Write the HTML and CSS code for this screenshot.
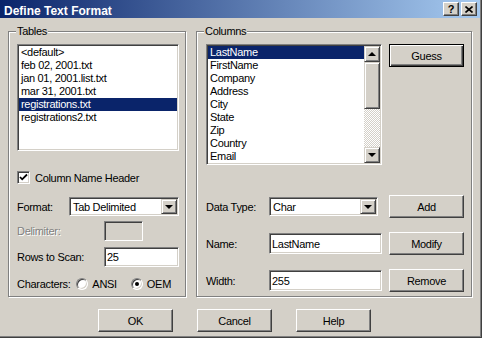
FILE: index.html
```html
<!DOCTYPE html>
<html lang="en">
<head>
    <meta charset="UTF-8">
    <title>Define Text Format</title>
    <link rel="stylesheet" href="styles.css">
</head>
<body>
    <div class="window">
        <div class="titlebar">
            <span class="title">Define Text Format</span>
            <div class="caption-buttons">
                <span class="caption-btn help">?</span>
                <span class="caption-btn close">
                    <svg width="8" height="7" viewBox="0 0 8 7"><path d="M0.5 0.5 L7.5 6.5 M7.5 0.5 L0.5 6.5" stroke="#000" stroke-width="1.6" fill="none"/></svg>
                </span>
            </div>
        </div>

        <div class="client">
            <div class="groups">
                <div class="group tables">
                    <div class="group-label">Tables</div>
                    <div class="group-body">
                        <div class="listbox table-list">
                            <div class="list-item">&lt;default&gt;</div>
                            <div class="list-item">feb 02, 2001.txt</div>
                            <div class="list-item">jan 01, 2001.list.txt</div>
                            <div class="list-item">mar 31, 2001.txt</div>
                            <div class="list-item selected">registrations.txt</div>
                            <div class="list-item">registrations2.txt</div>
                        </div>

                        <div class="check-row">
                            <span class="checkbox">
                                <svg width="9" height="9" viewBox="0 0 9 9"><path d="M1 4 L3.2 6.3 L8 1.5" stroke="#000" stroke-width="1.8" fill="none"/></svg>
                            </span>
                            <span>Column Name Header</span>
                        </div>

                        <div class="field-row format-row">
                            <span class="field-label">Format:</span>
                            <div class="combo format-combo">
                                <span class="combo-text">Tab Delimited</span>
                                <span class="combo-btn"><span class="arrow-down"></span></span>
                            </div>
                        </div>

                        <div class="field-row delim-row">
                            <span class="field-label disabled">Delimiter:</span>
                            <div class="textbox disabled-box"></div>
                        </div>

                        <div class="field-row scan-row">
                            <span class="field-label">Rows to Scan:</span>
                            <div class="textbox scan-box">25</div>
                        </div>

                        <div class="field-row chars-row">
                            <span class="field-label">Characters:</span>
                            <span class="radio-option">
                                <span class="radio"></span>ANSI
                            </span>
                            <span class="radio-option">
                                <span class="radio checked"><span class="dot"></span></span>OEM
                            </span>
                        </div>
                    </div>
                </div>

                <div class="group columns">
                    <div class="group-label">Columns</div>
                    <div class="group-body">
                        <div class="columns-top">
                            <div class="listbox column-list">
                                <div class="list-items">
                                    <div class="list-item selected">LastName</div>
                                    <div class="list-item">FirstName</div>
                                    <div class="list-item">Company</div>
                                    <div class="list-item">Address</div>
                                    <div class="list-item">City</div>
                                    <div class="list-item">State</div>
                                    <div class="list-item">Zip</div>
                                    <div class="list-item">Country</div>
                                    <div class="list-item">Email</div>
                                </div>
                                <div class="scrollbar">
                                    <span class="sb-btn"><span class="arrow-up"></span></span>
                                    <span class="sb-thumb"></span>
                                    <span class="sb-track"></span>
                                    <span class="sb-btn"><span class="arrow-down"></span></span>
                                </div>
                            </div>
                            <button class="btn default">Guess</button>
                        </div>

                        <div class="column-form">
                            <span class="field-label">Data Type:</span>
                            <div class="combo type-combo">
                                <span class="combo-text">Char</span>
                                <span class="combo-btn"><span class="arrow-down"></span></span>
                            </div>
                            <button class="btn">Add</button>

                            <span class="field-label">Name:</span>
                            <div class="textbox">LastName</div>
                            <button class="btn">Modify</button>

                            <span class="field-label">Width:</span>
                            <div class="textbox">255</div>
                            <button class="btn">Remove</button>
                        </div>
                    </div>
                </div>
            </div>

            <div class="footer">
                <button class="btn">OK</button>
                <button class="btn">Cancel</button>
                <button class="btn">Help</button>
            </div>
        </div>
    </div>
</body>
</html>
```

FILE: styles.css
```css
body {
    margin: 0;
    background-color: #d4d0c8;
    font-family: "Liberation Sans", Arial, sans-serif;
    font-size: 11px;
    letter-spacing: -0.3px;
    color: #000;
}
.window {
    width: 482px;
    height: 338px;
    box-sizing: border-box;
    background-color: #d4d0c8;
    border-right: 1px solid #404040;
    border-bottom: 1px solid #404040;
    box-shadow: inset -1px -1px 0 #808080;
}

/* title bar */
.titlebar {
    height: 18px;
    margin-right: 1px;
    padding: 0 3px 0 4px;
    display: flex;
    justify-content: space-between;
    align-items: flex-start;
    background: linear-gradient(to right, #0a246a, #a6caf0);
}
.title {
    color: #fff;
    font-weight: bold;
    font-size: 12px;
    letter-spacing: 0;
    line-height: 14px;
    padding-top: 4px;
}
.caption-buttons {
    display: flex;
    gap: 2px;
    margin-top: 2px;
}
.caption-btn {
    width: 16px;
    height: 14px;
    box-sizing: border-box;
    display: flex;
    align-items: center;
    justify-content: center;
    background-color: #d4d0c8;
    border: 1px solid;
    border-color: #fff #404040 #404040 #fff;
    box-shadow: inset -1px -1px 0 #808080;
    font-weight: bold;
    font-size: 11px;
    letter-spacing: 0;
}

/* client area */
.client {
    padding: 13px 0 0 8px;
}
.groups {
    display: flex;
    gap: 10px;
}
.group {
    height: 266px;
    box-sizing: border-box;
    border: 1px solid #808080;
    box-shadow: 1px 1px 0 #fff, inset 1px 1px 0 #fff;
}
.group-label {
    width: fit-content;
    margin: -7px 0 0 7px;
    padding: 0 1px;
    line-height: 13px;
    background-color: #d4d0c8;
}
.tables {
    width: 178px;
}
.columns {
    width: 276px;
}
.tables .group-body {
    padding: 6px 0 0 8px;
    display: flex;
    flex-direction: column;
}
.columns .group-body {
    padding: 6px 0 0 9px;
}

/* list boxes */
.listbox {
    box-sizing: border-box;
    background-color: #fff;
    border: 1px solid;
    border-color: #808080 #fff #fff #808080;
    box-shadow: inset 1px 1px 0 #404040, inset -1px -1px 0 #d4d0c8;
    padding: 1px;
}
.table-list {
    width: 162px;
    height: 107px;
}
.column-list {
    width: 176px;
    height: 121px;
    display: flex;
}
.list-items {
    flex: 1;
}
.list-item {
    height: 13px;
    line-height: 13px;
    padding-left: 2px;
    white-space: nowrap;
}
.list-item.selected {
    background-color: #0a246a;
    color: #fff;
}

/* scrollbar */
.scrollbar {
    width: 16px;
    display: flex;
    flex-direction: column;
}
.sb-btn,
.sb-thumb {
    box-sizing: border-box;
    background-color: #d4d0c8;
    border: 1px solid;
    border-color: #d4d0c8 #404040 #404040 #d4d0c8;
    box-shadow: inset 1px 1px 0 #fff, inset -1px -1px 0 #808080;
}
.sb-btn {
    height: 16px;
    display: flex;
    align-items: center;
    justify-content: center;
}
.sb-thumb {
    height: 47px;
}
.sb-track {
    flex: 1;
    background-image: conic-gradient(#fff 25%, #d4d0c8 0 50%, #fff 0 75%, #d4d0c8 0);
    background-size: 2px 2px;
}
.arrow-down,
.arrow-up {
    width: 0;
    height: 0;
    border-left: 4px solid transparent;
    border-right: 4px solid transparent;
}
.arrow-down {
    border-top: 4px solid #000;
}
.arrow-up {
    border-bottom: 4px solid #000;
}

/* checkbox */
.check-row {
    margin-top: 20px;
    height: 13px;
    display: flex;
    align-items: center;
    gap: 5px;
}
.checkbox {
    width: 13px;
    height: 13px;
    box-sizing: border-box;
    display: flex;
    align-items: center;
    justify-content: center;
    background-color: #fff;
    border: 1px solid;
    border-color: #808080 #fff #fff #808080;
    box-shadow: inset 1px 1px 0 #404040, inset -1px -1px 0 #d4d0c8;
}

/* form rows */
.field-row {
    display: flex;
    align-items: center;
}
.format-row {
    margin-top: 13px;
    height: 19px;
}
.format-row .field-label {
    width: 52px;
}
.delim-row {
    margin-top: 5px;
    height: 20px;
}
.delim-row .field-label,
.scan-row .field-label {
    width: 87px;
}
.scan-row {
    margin-top: 6px;
    height: 20px;
}
.chars-row {
    margin-top: 10px;
    height: 13px;
}
.chars-row .field-label {
    width: 71px;
}
.field-label {
    white-space: nowrap;
}
.field-label.disabled {
    color: #808080;
    text-shadow: 1px 1px 0 #fff;
}

.textbox,
.combo {
    box-sizing: border-box;
    background-color: #fff;
    border: 1px solid;
    border-color: #808080 #fff #fff #808080;
    box-shadow: inset 1px 1px 0 #404040, inset -1px -1px 0 #d4d0c8;
    display: flex;
    align-items: center;
    padding: 0 1px 0 2px;
    white-space: nowrap;
}
.textbox {
    height: 21px;
}
.disabled-box {
    width: 39px;
    height: 20px;
    background-color: #d4d0c8;
}
.scan-box {
    width: 75px;
    height: 20px;
}
.combo {
    height: 19px;
    justify-content: space-between;
    padding: 1px;
}
.combo-text {
    padding-left: 2px;
}
.format-combo {
    width: 110px;
}
.type-combo {
    width: 109px;
}
.combo-btn {
    width: 16px;
    height: 15px;
    box-sizing: border-box;
    display: flex;
    align-items: center;
    justify-content: center;
    background-color: #d4d0c8;
    border: 1px solid;
    border-color: #d4d0c8 #404040 #404040 #d4d0c8;
    box-shadow: inset 1px 1px 0 #fff, inset -1px -1px 0 #808080;
}

/* radio buttons */
.radio-option {
    display: flex;
    align-items: center;
    gap: 4px;
    margin-right: 14px;
}
.radio {
    width: 12px;
    height: 12px;
    box-sizing: border-box;
    border-radius: 50%;
    background-color: #fff;
    border: 1px solid;
    border-color: #808080 #fff #fff #808080;
    box-shadow: inset 1px 1px 0 #404040, inset -1px -1px 0 #d4d0c8;
    display: flex;
    align-items: center;
    justify-content: center;
}
.dot {
    width: 4px;
    height: 4px;
    border-radius: 50%;
    background-color: #000;
}

/* columns side */
.columns-top {
    display: flex;
    align-items: flex-start;
    gap: 7px;
}
.column-form {
    margin-top: 30px;
    display: grid;
    grid-template-columns: 56px 113px 75px;
    grid-auto-rows: 23px;
    column-gap: 7px;
    row-gap: 14px;
    align-items: center;
}
.column-form .textbox {
    width: 113px;
}

/* buttons */
.btn {
    width: 75px;
    height: 23px;
    padding: 0;
    box-sizing: border-box;
    display: flex;
    align-items: center;
    justify-content: center;
    font: inherit;
    letter-spacing: inherit;
    color: #000;
    background-color: #d4d0c8;
    border: 1px solid;
    border-color: #fff #404040 #404040 #fff;
    box-shadow: inset -1px -1px 0 #808080;
}
.btn.default {
    border-color: #000;
    box-shadow: inset 1px 1px 0 #fff, inset -1px -1px 0 #404040, inset -2px -2px 0 #808080;
}
.footer {
    margin-top: 12px;
    padding-left: 90px;
    display: flex;
    gap: 24px;
}
```
